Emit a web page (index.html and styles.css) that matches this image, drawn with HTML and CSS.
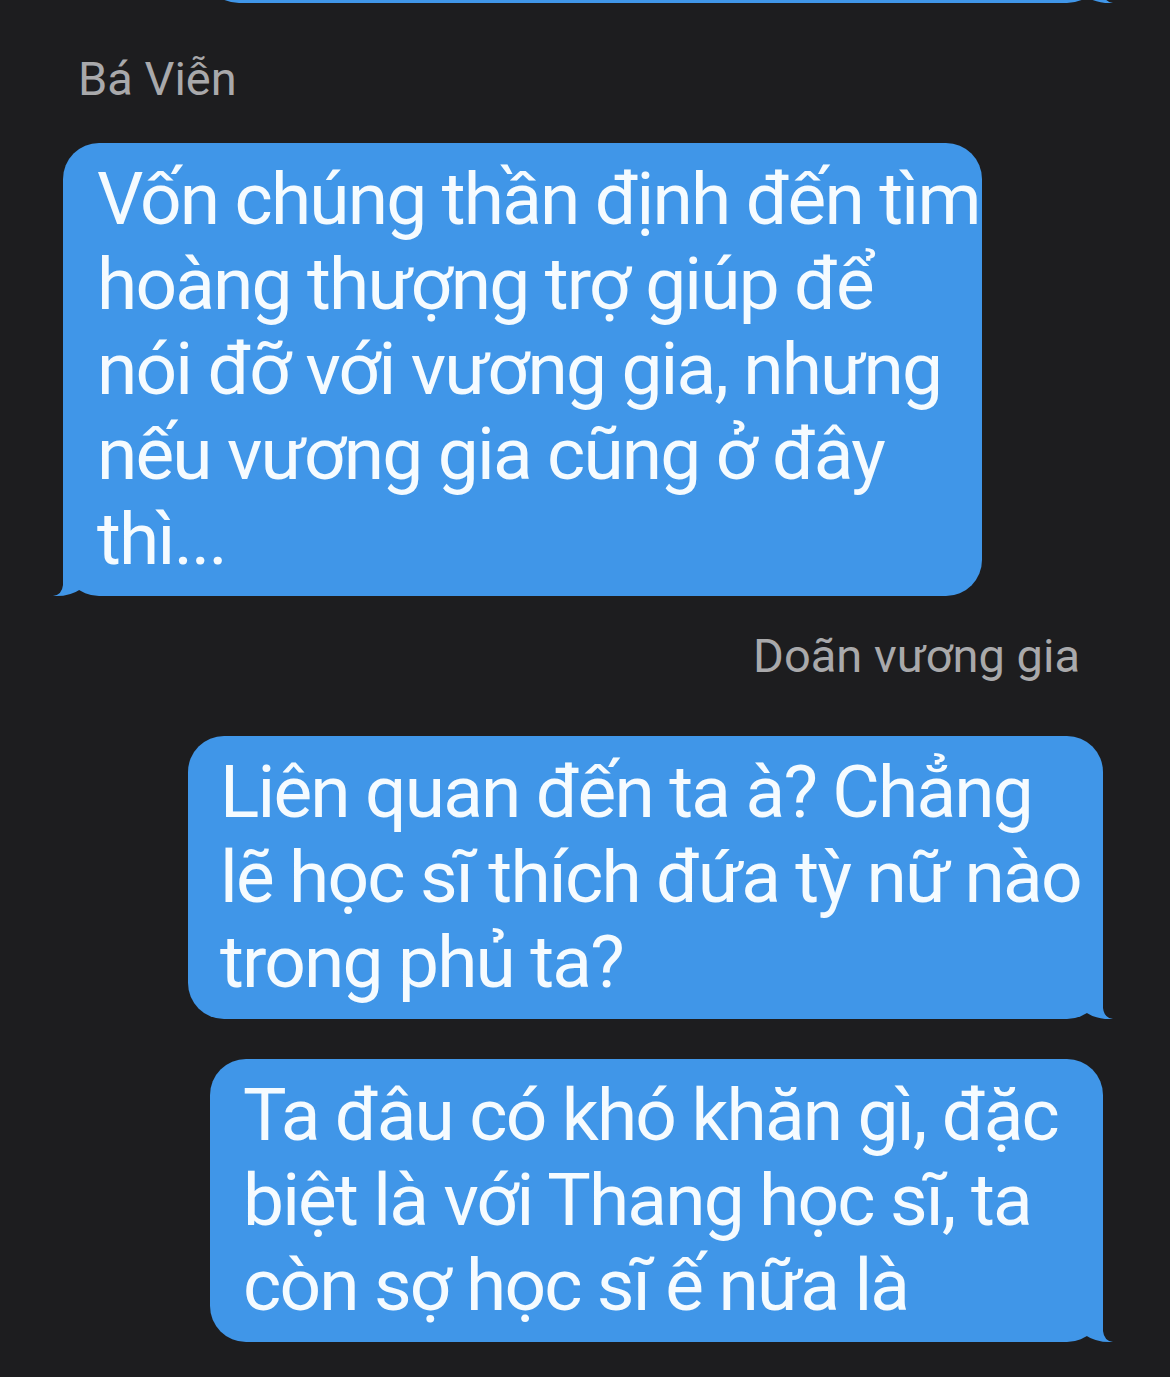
FILE: index.html
```html
<!DOCTYPE html>
<html lang="vi">
<head>
    <meta charset="UTF-8">
    <meta name="viewport" content="width=device-width, initial-scale=1.0">
    <title>Tin nhắn</title>
    <link rel="stylesheet" href="styles.css">
</head>
<body>

    <div class="thread">
        <div class="row row-out">
            <div class="bubble out bubble-prev">
                <svg class="tail" viewBox="0 0 46 42"><path d="M16,0 L34,0 L34,30 Q35,40 44,41 Q28,42 16,34 Z"/></svg>
            </div>
        </div>

        <div class="name name-in">Bá Viễn</div>
        <div class="row row-in">
            <div class="bubble in bubble-a">Vốn chúng thần định đến tìm<br>hoàng thượng trợ giúp để<br>nói đỡ với vương gia, nhưng<br>nếu vương gia cũng ở đây<br>thì...
                <svg class="tail" viewBox="0 0 46 42"><path d="M16,0 L34,0 L34,30 Q35,40 44,41 Q28,42 16,34 Z"/></svg>
            </div>
        </div>

        <div class="name name-out">Doãn vương gia</div>
        <div class="row row-out">
            <div class="bubble out bubble-b">Liên quan đến ta à? Chẳng<br>lẽ học sĩ thích đứa tỳ nữ nào<br>trong phủ ta?
                <svg class="tail" viewBox="0 0 46 42"><path d="M16,0 L34,0 L34,30 Q35,40 44,41 Q28,42 16,34 Z"/></svg>
            </div>
        </div>
        <div class="row row-out row-next">
            <div class="bubble out bubble-c">Ta đâu có khó khăn gì, đặc<br>biệt là với Thang học sĩ, ta<br>còn sợ học sĩ ế nữa là
                <svg class="tail" viewBox="0 0 46 42"><path d="M16,0 L34,0 L34,30 Q35,40 44,41 Q28,42 16,34 Z"/></svg>
            </div>
        </div>
    </div>

</body>
</html>
```

FILE: styles.css
```css
body {
    margin: 0;
    background-color: #1d1d1f;
    font-family: Roboto, "Liberation Sans", sans-serif;
    height: 1377px;
    overflow: hidden;
}

.thread {
    display: flex;
    flex-direction: column;
}

.row {
    display: flex;
}

.row-in {
    justify-content: flex-start;
    padding-left: 63px;
    margin-top: 36px;
}

.row-out {
    justify-content: flex-end;
    padding-right: 67px;
}

.row-next {
    margin-top: 40px;
}

.name {
    font-size: 47px;
    line-height: 56px;
    color: #a9a9ab;
}

.name-in {
    margin-top: 48px;
    padding-left: 78px;
}

.name-out {
    margin-top: 32px;
    padding-right: 90px;
    text-align: right;
    margin-bottom: 52px;
}

.bubble {
    position: relative;
    box-sizing: border-box;
    background-color: #4096e8;
    color: #f5fbff;
    font-size: 73px;
    line-height: 85px;
    letter-spacing: -0.025em;
    white-space: nowrap;
    padding: 14px 0;
    border-radius: 36px;
}

.bubble-prev {
    width: 900px;
    height: 80px;
    margin-top: -77px;
}

.bubble-a {
    width: 919px;
    padding-left: 34px;
}

.bubble-b {
    width: 915px;
    padding-left: 32px;
}

.bubble-c {
    width: 893px;
    padding-left: 33px;
}

.tail {
    position: absolute;
    bottom: -1px;
    width: 46px;
    height: 42px;
    fill: #4096e8;
}

.out .tail {
    right: -12px;
}

.in .tail {
    left: -12px;
    transform: scaleX(-1);
}
```
